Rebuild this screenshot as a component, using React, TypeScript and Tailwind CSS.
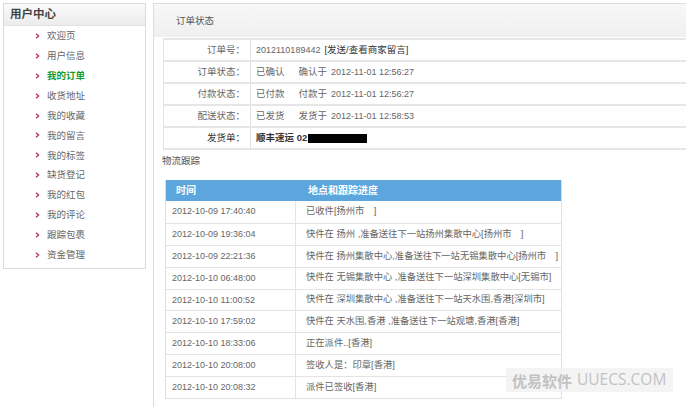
import React from "react";

const menu = [
  "欢迎页",
  "用户信息",
  "我的订单",
  "收货地址",
  "我的收藏",
  "我的留言",
  "我的标签",
  "缺货登记",
  "我的红包",
  "我的评论",
  "跟踪包裹",
  "资金管理",
];

const logs: [string, string][] = [
  ["2012-10-09 17:40:40", "已收件[扬州市　]"],
  ["2012-10-09 19:36:04", "快件在 扬州 ,准备送往下一站扬州集散中心[扬州市　]"],
  ["2012-10-09 22:21:36", "快件在 扬州集散中心,准备送往下一站无锡集散中心[扬州市　]"],
  ["2012-10-10 06:48:00", "快件在 无锡集散中心 ,准备送往下一站深圳集散中心[无锡市]"],
  ["2012-10-10 11:00:52", "快件在 深圳集散中心 ,准备送往下一站天水围,香港[深圳市]"],
  ["2012-10-10 17:59:02", "快件在 天水围,香港 ,准备送往下一站观塘,香港[香港]"],
  ["2012-10-10 18:33:06", "正在派件..[香港]"],
  ["2012-10-10 20:08:00", "签收人是：印章[香港]"],
  ["2012-10-10 20:08:32", "派件已签收[香港]"],
];

function Arrow() {
  return (
    <svg width="5" height="6" viewBox="0 0 5 6" className="mr-[7px] shrink-0">
      <polyline points="1,0.8 3.6,3 1,5.2" fill="none" stroke="#b8315a" strokeWidth="1.3" />
    </svg>
  );
}

export default function App() {
  const font = { fontFamily: '"Liberation Sans", "Noto Sans CJK SC", sans-serif' };
  return (
    <div
      className="relative w-[686px] h-[407px] overflow-hidden bg-white text-[#666] text-[9.5px] leading-none"
      style={font}
    >
      <div className="flex items-start">
        {/* Sidebar */}
        <div className="ml-[3px] mt-[3px] w-[143px] h-[266px] border border-[#dcdcdc] bg-white">
          <div className="h-[22px] border-b border-[#e2e2e2] bg-gradient-to-b from-[#fafafa] to-[#ececec] pl-[6px] flex items-center text-[11.5px] font-bold text-[#444]">
            用户中心
          </div>
          <div className="flex flex-col">
            {menu.map((m) => (
              <div key={m} className="h-[19.9px] flex items-center pl-[31px]">
                <Arrow />
                <span className={m === "我的订单" ? "text-[#139a2e] font-bold" : "text-[#666]"}>{m}</span>
              </div>
            ))}
          </div>
        </div>

        {/* Main panel */}
        <div className="ml-[7px] mt-[3px] flex-1 h-[420px] border-l border-t border-[#dcdcdc]">
          <div className="h-[33px] bg-gradient-to-b from-[#f8f8f8] to-[#efefef] pl-[22px] flex items-center text-[#555]">
            订单状态
          </div>

          <div className="ml-[9px] mt-[1px] border-l border-[#e2e2e2]">
            {[
              ["订单号：", <><span className="text-[9px]">2012110189442</span><span className="ml-[4px] text-[#333]">[发送/查看商家留言]</span></>],
              ["订单状态：", <><span>已确认</span><span className="ml-[14px]">确认于</span><span className="ml-[4px] text-[9px]">2012-11-01 12:56:27</span></>],
              ["付款状态：", <><span>已付款</span><span className="ml-[14px]">付款于</span><span className="ml-[4px] text-[9px]">2012-11-01 12:56:27</span></>],
              ["配送状态：", <><span>已发货</span><span className="ml-[14px]">发货于</span><span className="ml-[4px] text-[9px]">2012-11-01 12:58:53</span></>],
              ["发货单：", <><span className="font-bold text-[#333]">顺丰速运 02</span><span className="ml-[1px] inline-block w-[59px] h-[9px] bg-black" /></>],
            ].map(([label, val], i) => (
              <div key={i} className="flex h-[22px] border-t-2 border-[#e6e6e6]">
                <div
                  className={
                    "w-[87px] shrink-0 flex items-center justify-end pr-[5px] border-r border-[#e2e2e2] " +
                    (i === 4 ? "text-[#333]" : "text-[#666]")
                  }
                >
                  {label}
                </div>
                <div className="flex items-center pl-[5px] whitespace-nowrap">{val}</div>
              </div>
            ))}
            <div className="border-t-2 border-[#e6e6e6]" />
          </div>

          <div className="mt-[4px] h-[14px] pl-[8px] flex items-center text-[#555]">物流跟踪</div>

          <div className="ml-[11px] mt-[12px] w-[397px] border-x border-b border-[#e0e0e0]">
            <div className="flex h-[21px] bg-[#5ca6dd] text-white font-bold text-[10px]">
              <div className="w-[130px] shrink-0 flex items-center pl-[10px]">时间</div>
              <div className="flex items-center pl-[12px]">地点和跟踪进度</div>
            </div>
            {logs.map(([t, d], i) => (
              <div key={i} className={"flex h-[21.9px] " + (i > 0 ? "border-t border-[#e4e4e4]" : "")}>
                <div className="w-[130px] shrink-0 flex items-center pl-[6px] border-r border-[#e4e4e4] text-[9px]">{t}</div>
                <div className="flex items-center pl-[10px] whitespace-nowrap text-[9.3px]">{d}</div>
              </div>
            ))}
          </div>
        </div>
      </div>

      {/* Watermark */}
      <div className="absolute left-[506px] top-[368px] w-[167px] h-[24px] bg-[#f1f1f1]/80 flex items-center pl-[6px] gap-[5px] text-[#c2c2c2]">
        <span className="text-[15px] font-bold" style={{ fontFamily: '"Noto Sans CJK SC", sans-serif' }}>优易软件</span>
        <span className="text-[15.5px]" style={{ fontFamily: '"Open Sans", sans-serif' }}>UUECS.COM</span>
      </div>
    </div>
  );
}
